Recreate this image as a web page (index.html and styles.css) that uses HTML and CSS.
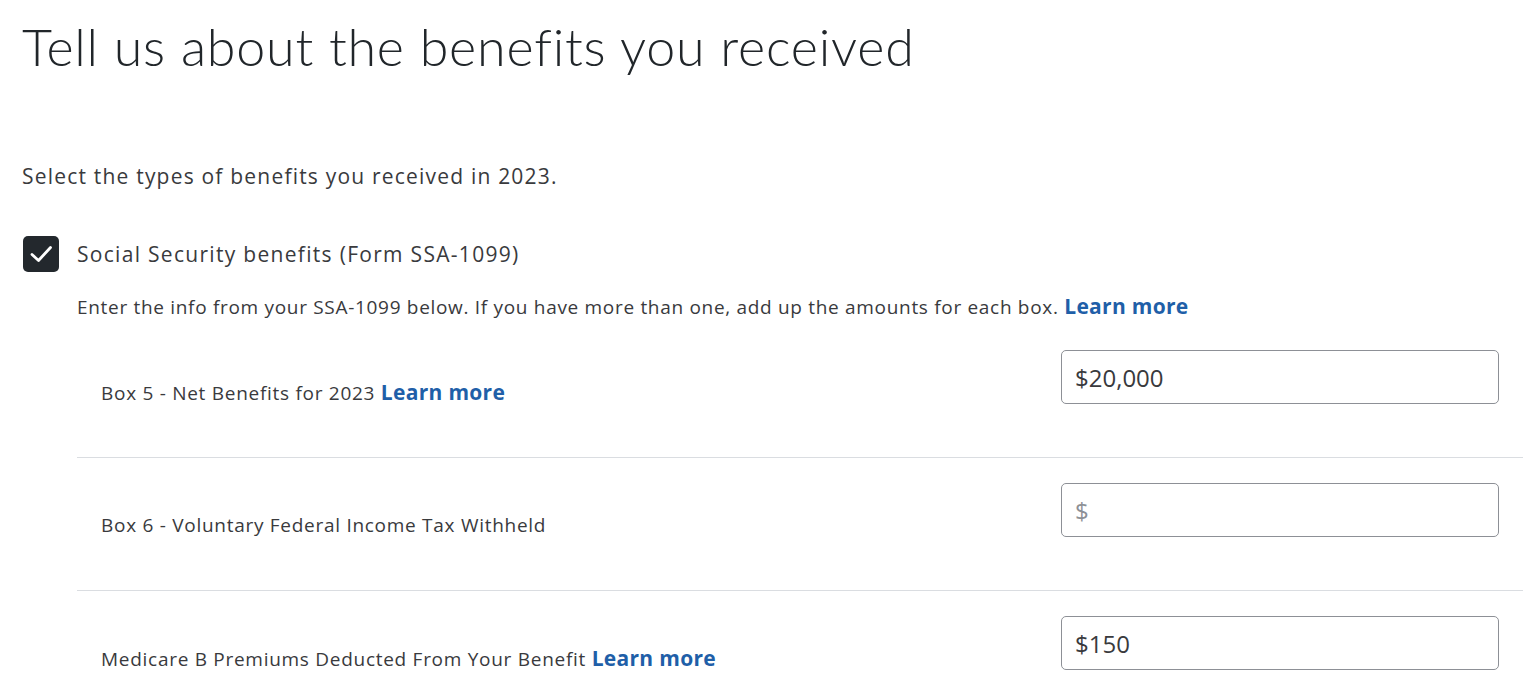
FILE: index.html
```html
<!DOCTYPE html>
<html lang="en">
<head>
    <meta charset="UTF-8">
    <meta name="viewport" content="width=device-width, initial-scale=1.0">
    <title>Social Security Benefits</title>
    <link rel="stylesheet" href="styles.css">
</head>
<body>
    <div class="page">
        <h1 class="page-title">Tell us about the benefits you received</h1>

        <p class="intro">Select the types of benefits you received in 2023.</p>

        <label class="check-row">
            <span class="checkbox">
                <svg width="24" height="24" viewBox="0 0 24 24" aria-hidden="true">
                    <path d="M3 12.5 L9.5 18.5 L21.5 5.5" fill="none" stroke="#fff" stroke-width="2.8" stroke-linecap="round" stroke-linejoin="round"/>
                </svg>
            </span>
            <span class="check-label">Social Security benefits (Form SSA-1099)</span>
        </label>

        <div class="benefit-section">
            <p class="info">Enter the info from your SSA-1099 below. If you have more than one, add up the amounts for each box. <a href="#" class="learn-more">Learn more</a></p>

            <div class="field-row">
                <div class="field-label">Box 5 - Net Benefits for 2023 <a href="#" class="learn-more">Learn more</a></div>
                <input class="money-input" type="text" value="$20,000">
            </div>
            <div class="field-row">
                <div class="field-label">Box 6 - Voluntary Federal Income Tax Withheld</div>
                <input class="money-input" type="text" placeholder="$">
            </div>
            <div class="field-row">
                <div class="field-label">Medicare B Premiums Deducted From Your Benefit <a href="#" class="learn-more">Learn more</a></div>
                <input class="money-input" type="text" value="$150">
            </div>
        </div>
    </div>
</body>
</html>
```

FILE: styles.css
```css
body {
    margin: 0;
    background: #fff;
    color: #393a3d;
    font-family: "Open Sans", "Noto Sans", sans-serif;
    font-weight: 400;
}
.page {
    padding: 14px 2px 0 22px;
}
.page-title {
    margin: 0;
    font-family: Lato, "Open Sans", sans-serif;
    font-size: 52px;
    font-weight: 300;
    letter-spacing: 0.78px;
    line-height: 64px;
    color: #21262a;
}
.intro {
    margin: 84px 0 0 0;
    font-size: 21px;
    letter-spacing: 1.2px;
    line-height: 28px;
}
.check-row {
    display: flex;
    align-items: center;
    margin-top: 46px;
    cursor: pointer;
}
.checkbox {
    width: 36px;
    height: 36px;
    border-radius: 5px;
    background: #23282d;
    display: flex;
    align-items: center;
    justify-content: center;
    flex-shrink: 0;
    margin-left: 1px;
}
.check-label {
    margin-left: 18px;
    font-size: 21px;
    letter-spacing: 1.3px;
    line-height: 28px;
}
.benefit-section {
    margin-left: 55px;
}
.info {
    margin: 22px 0 5px 0;
    font-size: 19px;
    letter-spacing: 0.69px;
    line-height: 26px;
}
.learn-more {
    color: #1f5fa8;
    font-weight: 700;
    font-size: 21px;
    letter-spacing: 0.3px;
    line-height: 24px;
    text-decoration: none;
}
.field-row {
    box-sizing: border-box;
    height: 133px;
    display: flex;
    justify-content: space-between;
    align-items: flex-start;
    padding: 25px 24px 0 24px;
    border-bottom: 1px solid #dadde1;
}
.field-row:last-child {
    height: auto;
    border-bottom: none;
}
.field-label {
    margin-top: 30px;
    font-size: 19px;
    letter-spacing: 0.72px;
    line-height: 24px;
}
.money-input {
    box-sizing: border-box;
    width: 438px;
    height: 54px;
    padding: 0 13px;
    border: 1px solid #8d9096;
    border-radius: 5px;
    font-family: "Open Sans", sans-serif;
    font-size: 24px;
    font-weight: 400;
    color: #393a3d;
    outline: none;
}
.money-input::placeholder {
    color: #8d9096;
}
```
